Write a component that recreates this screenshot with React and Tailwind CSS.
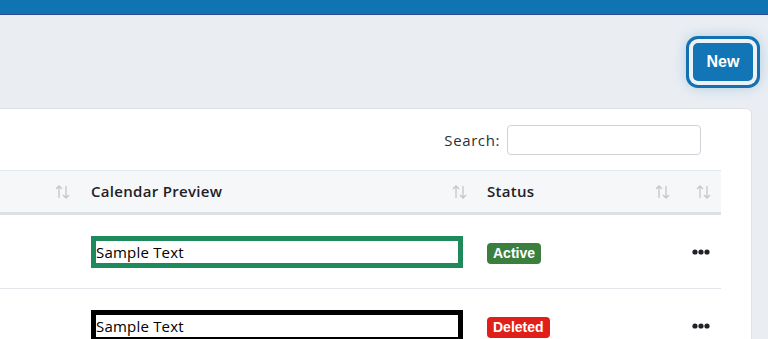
import React from "react";

const SortIcon = () => (
  <svg width="16" height="14" viewBox="0 0 16 14" fill="none" stroke="#c3c7cd" strokeWidth="1.3">
    <path d="M4 13V1M1 4l3-3 3 3" />
    <path d="M11 1v12M8 10l3 3 3-3" />
  </svg>
);

const Dots = () => (
  <svg width="18" height="6" viewBox="0 0 18 6" fill="#1f2328">
    <circle cx="3" cy="3" r="2.6" />
    <circle cx="9" cy="3" r="2.6" />
    <circle cx="15" cy="3" r="2.6" />
  </svg>
);

const rows = [
  { border: "border-[#1e8a5c]", status: "Active", badge: "bg-[#3b7f3f]" },
  { border: "border-black", status: "Deleted", badge: "bg-[#e01e1a]" },
];

const App = () => {
  return (
    <div
      className="min-h-screen h-[339px] overflow-hidden bg-[#eaeef3]"
      style={{ fontFamily: '"Open Sans", "Liberation Sans", sans-serif' }}
    >
      <div className="h-[15px] bg-[#0f74b1] border-b border-[#2f4a93]" />

      <div className="flex justify-end pt-[28px] pr-[15px]">
        <button
          className="w-[60px] h-[38px] rounded-[5px] bg-[#1275b5] text-white text-[16px] font-bold shadow-[0_0_0_4px_#eef2f6,0_0_0_7px_#1272b1,0_0_14px_6px_rgba(18,114,177,0.3)]"
          style={{ fontFamily: '"Liberation Sans", Arial, sans-serif' }}
        >
          New
        </button>
      </div>

      <div className="mt-[27px] -ml-[120px] mr-[16px] bg-white border border-[#dde2e8] rounded-md pl-[16px] pr-[30px] pt-[16px]">
        <div className="flex justify-end items-center gap-[7px] mr-[20px] mb-[15px]">
          <span className="text-[15px] tracking-[0.6px] text-[#2b2f36]">Search:</span>
          <input className="w-[194px] h-[30px] rounded-[4px] border border-[#cfd3d8] outline-none" />
        </div>

        <table className="w-full border-collapse">
          <thead>
            <tr className="bg-[#f6f7f9] border-t border-[#e4e7eb] border-b-[3px] border-b-[#dde0e5] h-[43px]">
              <th className="w-[182px] pr-[8px]">
                <div className="flex justify-end"><SortIcon /></div>
              </th>
              <th className="w-[396px] pl-[12px] pr-[7px] text-left">
                <div className="flex items-center justify-between">
                  <span className="text-[15px] font-semibold tracking-[0.3px] text-[#1e2126]">Calendar Preview</span>
                  <SortIcon />
                </div>
              </th>
              <th className="w-[208px] pl-[12px] pr-[12px] text-left">
                <div className="flex items-center justify-between">
                  <span className="text-[15px] font-semibold tracking-[0.3px] text-[#1e2126]">Status</span>
                  <SortIcon />
                </div>
              </th>
              <th className="pr-[9px]">
                <div className="flex justify-end"><SortIcon /></div>
              </th>
            </tr>
          </thead>
          <tbody>
            {rows.map((r) => (
              <tr key={r.status} className="border-b border-[#e2e5e9] h-[75px]">
                <td />
                <td className="px-[12px]">
                  <div className={`h-[32px] border-[5px] ${r.border} flex items-center pt-[1px] text-[15px] tracking-[0.2px] text-black`}>
                    Sample Text
                  </div>
                </td>
                <td className="px-[12px]">
                  <span
                    className={`inline-block ${r.badge} text-white text-[14px] font-bold leading-[21px] px-[6px] rounded-[4px]`}
                    style={{ fontFamily: '"Liberation Sans", Arial, sans-serif' }}
                  >
                    {r.status}
                  </span>
                </td>
                <td>
                  <div className="flex justify-center pr-[2px]"><Dots /></div>
                </td>
              </tr>
            ))}
          </tbody>
        </table>
      </div>
    </div>
  );
};

export default App;
